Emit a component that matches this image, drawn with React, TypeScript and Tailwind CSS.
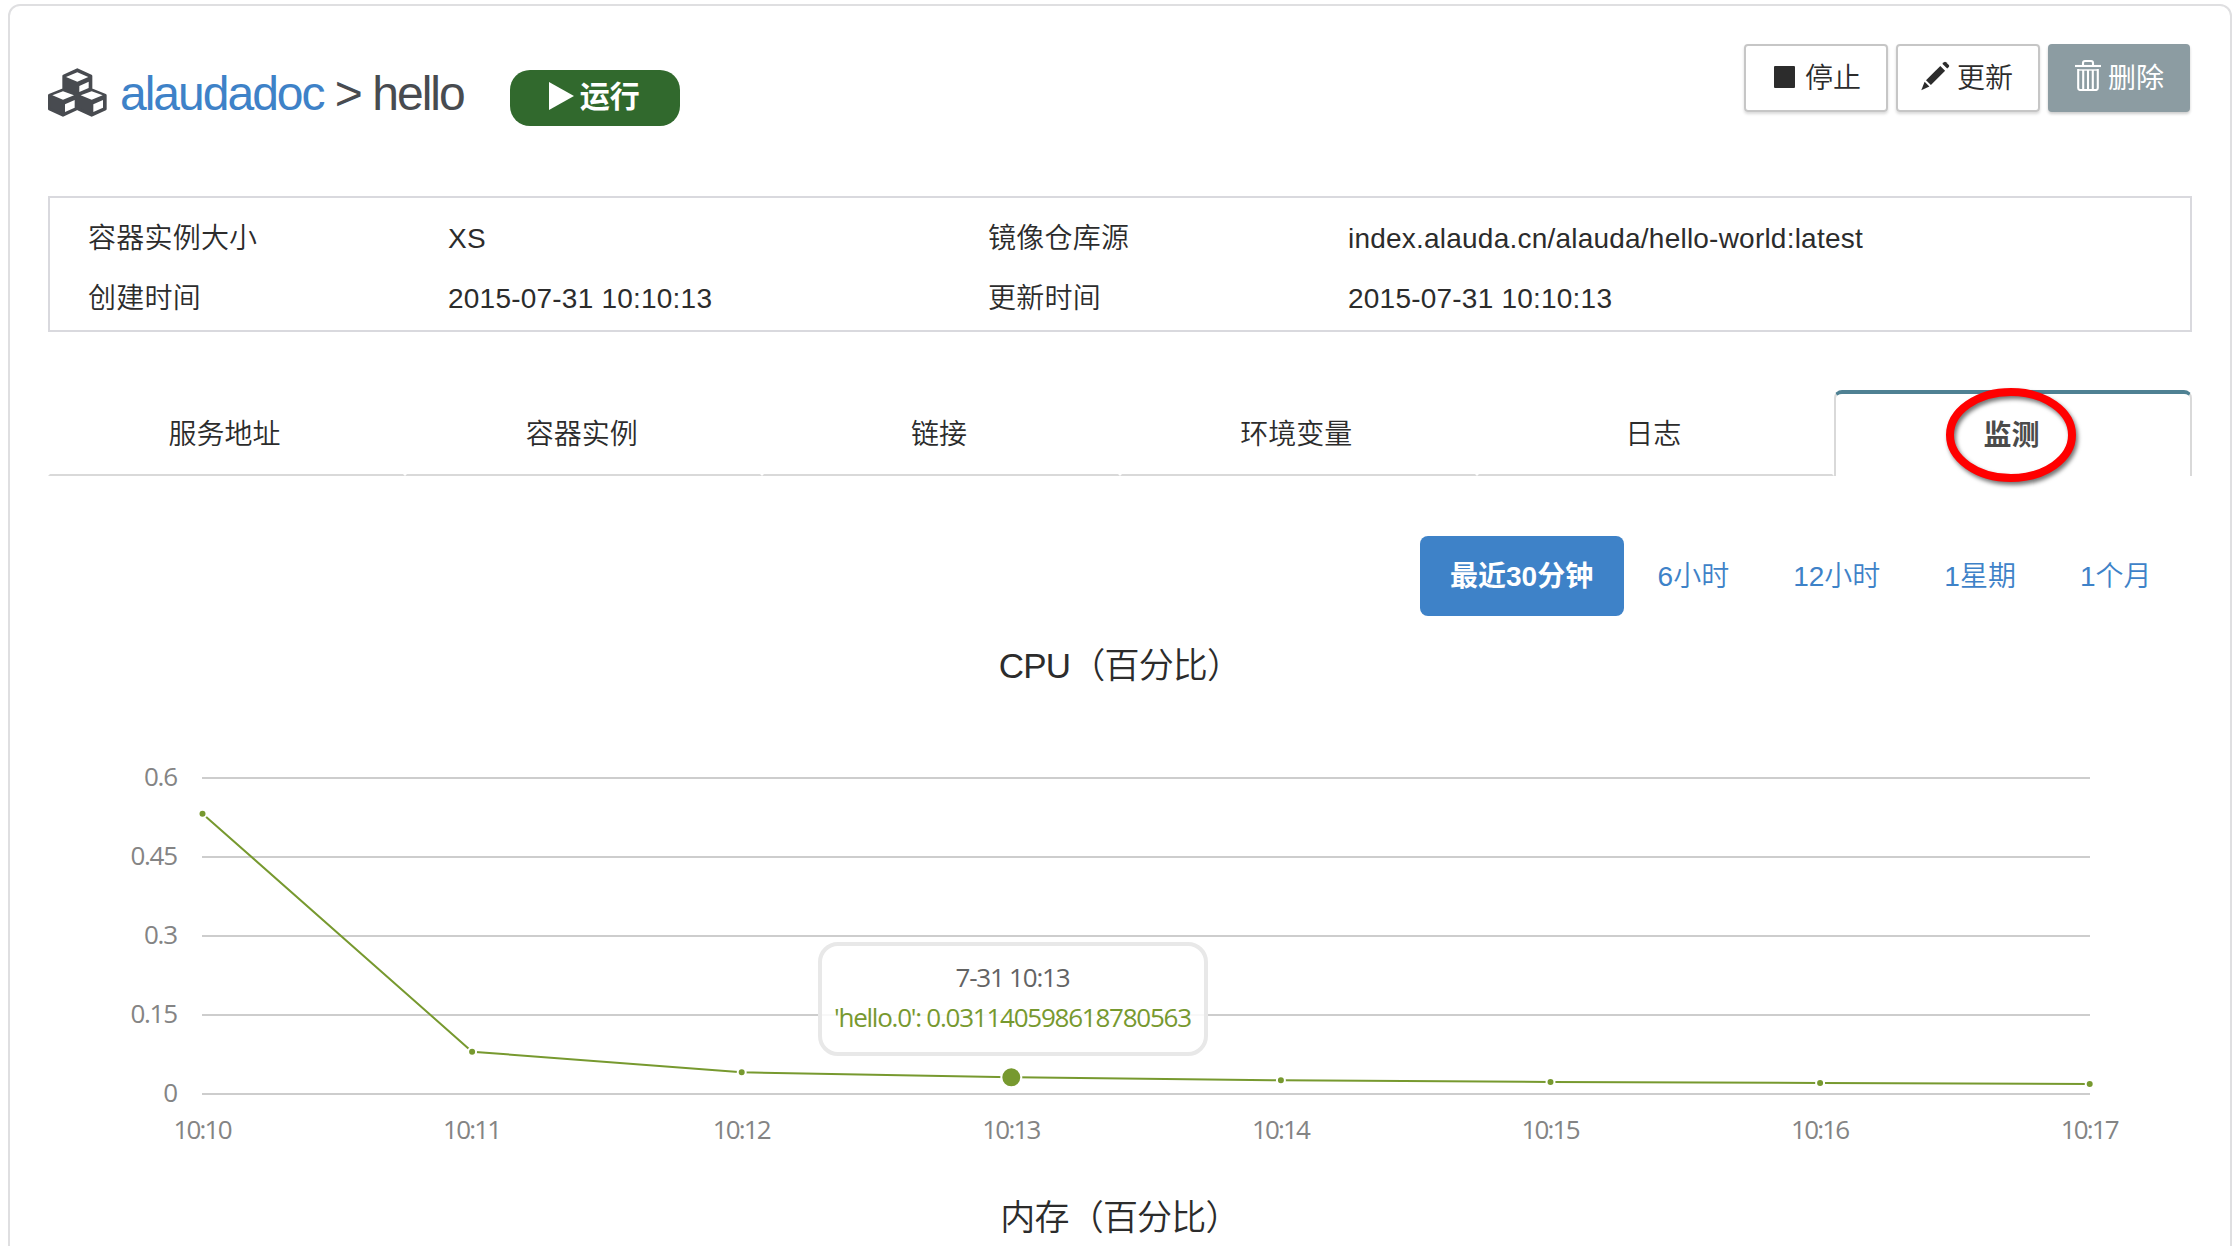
import React from "react";

const info = [
  ["容器实例大小", "XS", "镜像仓库源", "index.alauda.cn/alauda/hello-world:latest"],
  ["创建时间", "2015-07-31 10:10:13", "更新时间", "2015-07-31 10:10:13"],
];

const tabs = ["服务地址", "容器实例", "链接", "环境变量", "日志"];
const ranges = ["6小时", "12小时", "1星期", "1个月"];

const gridLines = [
  { label: "0.6", y: 778, w: 34 },
  { label: "0.45", y: 857, w: 47.5 },
  { label: "0.3", y: 936, w: 34 },
  { label: "0.15", y: 1015, w: 47.5 },
  { label: "0", y: 1094, w: 14 },
];

const points = [
  { label: "10:10", y: 813.7 },
  { label: "10:11", y: 1051.7 },
  { label: "10:12", y: 1072.3 },
  { label: "10:13", y: 1077.3 },
  { label: "10:14", y: 1080.3 },
  { label: "10:15", y: 1082 },
  { label: "10:16", y: 1083 },
  { label: "10:17", y: 1084 },
].map((p, i) => ({ ...p, x: 202.5 + i * 269.6 }));

function CubesIcon() {
  return (
    <svg className="-mt-0.5 h-[49px] w-[59px] shrink-0" viewBox="12 19 177 147">
      <g fill="#484b50" stroke="#484b50" strokeWidth="8" strokeLinejoin="round">
        <path d="M100 24 141 43V79L100 100 59 79V43Z" />
        <path d="M57 84 97 101V142L57 161 16 142V101Z" />
        <path d="M143 84 184 101V142L143 161 102 142V101Z" />
      </g>
      <g fill="#fff">
        <path d="M100 32 133 46 100 60 66 46Z" />
        <path d="M106 73 134 60V79L106 91Z" />
        <path d="M57 89 90 101 57 114 25 101Z" />
        <path d="M63 128 92 115V138L63 151Z" />
        <path d="M143 89 176 101 143 114 110 101Z" />
        <path d="M148 128 177 115V138L148 151Z" />
      </g>
    </svg>
  );
}

function PencilIcon() {
  return (
    <svg className="-mt-1.5 h-[30px] w-[30px]" viewBox="0 0 30 30" fill="#2c2c2c">
      <path d="M22.3 2.8 24 1.2q1-.9 2 0l2.8 2.8q.9 1 0 2L27.2 7.6Z" />
      <path d="M20.3 4.9 25.1 9.7 10.9 24 6 19.2Z" />
      <path d="M4.6 20.7 9.4 25.4 1.3 29.2Z" />
    </svg>
  );
}

function TrashIcon() {
  return (
    <svg className="-mt-2 h-8 w-[26px]" viewBox="0 0 26 32" fill="none" stroke="#fff" strokeWidth="2.1">
      <path d="M0 7H26" />
      <path d="M8 6.5V4Q8 2 10 2H16Q18 2 18 4V6.5" />
      <path d="M3.2 10V29Q3.2 31 5.2 31H20.8Q22.8 31 22.8 29V10" />
      <path d="M3 11H23" strokeWidth="1.4" />
      <path d="M8.2 11V30M13 11V30M17.8 11V30" />
    </svg>
  );
}

function Chart() {
  return (
    <svg
      className="block h-[446px] w-[2144px] font-['Open_Sans',sans-serif] text-[26px] font-normal"
      viewBox="48 730 2144 446"
    >
      {gridLines.map((g) => (
        <g key={g.label}>
          <path d={`M202 ${g.y}H2090`} stroke="#cdcdcd" strokeWidth="2" />
          <text x="178" y={g.y + 8} textAnchor="end" fill="#848484" textLength={g.w}>
            {g.label}
          </text>
        </g>
      ))}
      <polyline
        points={points.map((p) => `${p.x},${p.y}`).join(" ")}
        fill="none"
        stroke="#77992f"
        strokeWidth="2"
      />
      {points.map((p, i) => (
        <g key={p.label}>
          <circle cx={p.x} cy={p.y} r={i === 3 ? 10 : 4} fill="#77992f" stroke="#fff" strokeWidth="2" />
          <text x={p.x + 0.5} y="1138.5" textAnchor="middle" fill="#848484" textLength="59">
            {p.label}
          </text>
        </g>
      ))}
      <rect
        x="820"
        y="944"
        width="386"
        height="110"
        rx="18"
        fill="#fff"
        fillOpacity="0.85"
        stroke="#e8e8e8"
        strokeWidth="4"
      />
      <text x="1013" y="986.5" textAnchor="middle" fill="#636363" textLength="115">
        7-31 10:13
      </text>
      <text x="1013" y="1026.5" textAnchor="middle" fill="#77992f" textLength="358">
        'hello.0': 0.031140598618780563
      </text>
    </svg>
  );
}

export default function App() {
  return (
    <div className="h-[1246px] w-[2240px] overflow-hidden bg-white pt-1 pl-2 font-['Liberation_Sans','Noto_Sans_CJK_SC',sans-serif] text-[28px] font-[350] text-[#2c2c2c]">
      <main className="h-[1300px] w-[2224px] rounded-xl border-2 border-[#dfdfe1] px-[38px]">
        <header className="flex h-[190px] items-start">
          <div className="flex items-center pt-[61px]">
            <CubesIcon />
            <h1 className="ml-[13px] pt-0.5 text-[48px] leading-[50px] tracking-[-2px] whitespace-nowrap text-[#484b50]">
              <a className="text-[#3e82c8]">alaudadoc</a> &gt; hello
            </h1>
          </div>
          <div className="mt-16 ml-[46px] flex h-14 w-[170px] items-center gap-1.5 rounded-[20px] bg-[#31692d] pl-[39px] text-[30px] leading-none font-bold text-white">
            <svg className="-mt-1 h-7 w-[25px]" viewBox="0 0 25 28" fill="#fff">
              <path d="M0 0 25 14 0 28Z" />
            </svg>
            <span className="-mt-0.5">运行</span>
          </div>
          <div className="mt-[38px] ml-auto flex gap-2 leading-none">
            <button className="flex h-[68px] w-36 items-center rounded border-2 border-[#c6c6c6] pt-0.5 pl-7 shadow-[0_2px_3px_rgba(0,0,0,0.15)]">
              <span className="mr-[10px] -mt-1 h-[22px] w-[21px] rounded-[1px] bg-[#2c2c2c]" />
              停止
            </button>
            <button className="flex h-[68px] w-36 items-center gap-[7px] rounded border-2 border-[#c6c6c6] pt-0.5 pl-[22px] shadow-[0_2px_3px_rgba(0,0,0,0.15)]">
              <PencilIcon />
              更新
            </button>
            <button className="mr-0.5 flex h-[68px] w-[142px] items-center gap-[7px] rounded bg-[#8c9ca2] pt-0.5 pl-[27px] font-normal text-white shadow-[0_2px_3px_rgba(0,0,0,0.2)]">
              <TrashIcon />
              删除
            </button>
          </div>
        </header>

        <section className="flex h-[136px] flex-col justify-center border-2 border-[#d9d9de] pt-[9px] pl-[38px] tracking-[0.22px]">
          {info.map((row) => (
            <div key={row[0]} className="grid h-[60px] grid-cols-[360px_540px_360px_1fr] items-center">
              {row.map((cell, i) => (
                <span key={i} className="whitespace-nowrap">
                  {cell}
                </span>
              ))}
            </div>
          ))}
        </section>

        <nav className="mt-[58px] flex h-[86px]">
          {tabs.map((t) => (
            <div
              key={t}
              className="flex w-[357.2px] items-center justify-center border-x-2 border-b-2 border-x-transparent border-b-[#d9d9d9] pt-1.5 pr-1"
            >
              {t}
            </div>
          ))}
          <div className="relative flex w-[358px] items-center justify-center rounded-t-lg border-x-2 border-t-4 border-x-[#d9d9d9] border-t-[#4f8193] pt-px pr-[3px] font-bold text-[#4b4b4b]">
            监测
            <svg
              className="absolute top-[-12px] left-[100px] h-[110px] w-[150px] drop-shadow-[2px_3px_2px_rgba(0,0,0,0.55)]"
              viewBox="0 0 150 110"
            >
              <ellipse cx="75" cy="53" rx="61" ry="43" fill="none" stroke="#f00" strokeWidth="8" />
            </svg>
          </div>
        </nav>

        <div className="mt-[60px] flex h-20 justify-end gap-1 pr-[10.5px] text-[#3e82c8]">
          <div className="flex w-[204px] items-center justify-center rounded-lg bg-[#3e82c8] pt-0.5 font-bold whitespace-nowrap text-white">
            最近30分钟
          </div>
          {ranges.map((r) => (
            <div key={r} className="flex items-center px-[30px] pt-0.5 whitespace-nowrap">
              {r}
            </div>
          ))}
        </div>

        <section>
          <h2 className="flex h-[98px] items-center justify-center pt-0.5 text-[35px] tracking-[-0.8px]">CPU（百分比）</h2>
          <div className="h-4" />
          <Chart />
        </section>
        <h2 className="mt-[17px] text-center text-[35px] leading-[50px] tracking-[-0.8px]">内存（百分比）</h2>
      </main>
    </div>
  );
}
